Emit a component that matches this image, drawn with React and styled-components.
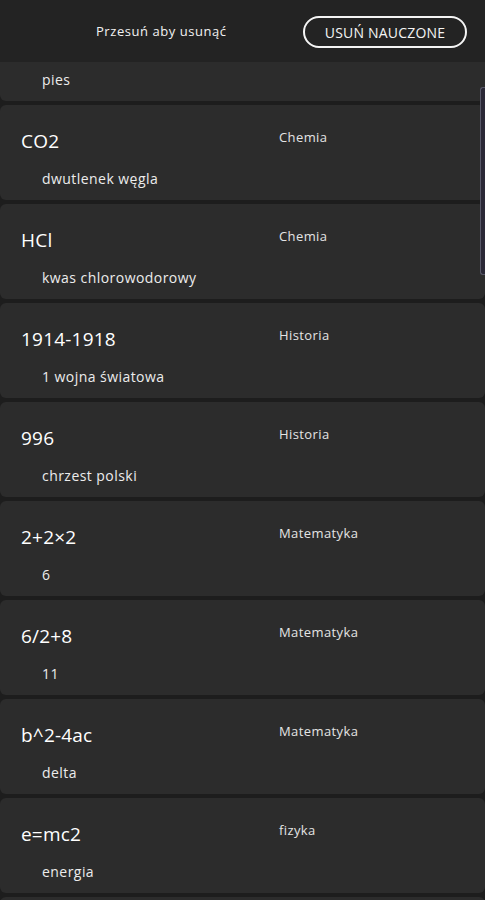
import React from "react";
import styled, { createGlobalStyle } from "styled-components";

const Global = createGlobalStyle`
  html, body { margin: 0; padding: 0; background: #1d1d1d; }
  body { font-family: "Open Sans", "Noto Sans", sans-serif; color: #fff; overflow: hidden; }
`;

const Screen = styled.div`
  position: relative;
  width: 485px;
  height: 900px;
  overflow: hidden;
  background: #1d1d1d;
  display: flex;
  flex-direction: column;
`;

const Header = styled.header`
  height: 62px;
  flex: none;
  background: #232323;
  display: flex;
  align-items: center;
  padding: 0 18px 0 96px;
  box-sizing: border-box;
  justify-content: space-between;
`;

const Hint = styled.span`
  font-size: 13px;
  font-weight: 500;
  letter-spacing: 0.55px;
  color: #f2f2f2;
`;

const ClearButton = styled.button`
  height: 32px;
  width: 164px;
  border: 2px solid #f4f4f4;
  border-radius: 16px;
  background: transparent;
  color: #f4f4f4;
  font-family: inherit;
  font-size: 14px;
  font-weight: 500;
  letter-spacing: 0.2px;
  padding: 0;
  margin-top: 2px;
`;

const List = styled.div`
  display: flex;
  flex-direction: column;
  gap: 4px;
`;

const Card = styled.div`
  background: #2c2c2c;
  border-radius: 6px;
  height: ${(p) => (p.$clipped ? "39px" : "95px")};
  border-top-left-radius: ${(p) => (p.$clipped ? "0" : "6px")};
  border-top-right-radius: ${(p) => (p.$clipped ? "0" : "6px")};
  box-sizing: border-box;
  padding: ${(p) => (p.$clipped ? "9px 0 0 42px" : "24px 0 0 21px")};
  display: grid;
  grid-template-columns: 258px 1fr;
  grid-template-rows: 24px 1fr;
  flex: none;
`;

const Term = styled.div`
  font-size: 19px;
  line-height: 24px;
  color: #fff;
  font-weight: 500;
  letter-spacing: 0.2px;
`;

const Category = styled.div`
  font-size: 13px;
  line-height: 18px;
  font-weight: 500;
  letter-spacing: 0.4px;
  color: #e4e4e4;
  margin-top: -1px;
`;

const Meaning = styled.div`
  grid-column: 1 / 2;
  font-size: 14px;
  line-height: 18px;
  font-weight: 500;
  letter-spacing: 0.45px;
  color: #ececec;
  padding-left: ${(p) => (p.$clipped ? "0" : "21px")};
  margin-top: ${(p) => (p.$clipped ? "0" : "17px")};
`;

const Scrollbar = styled.div`
  position: absolute;
  right: 0;
  top: 87px;
  width: 5px;
  height: 188px;
  box-sizing: border-box;
  border: 1px solid #585868;
  border-right: none;
  border-radius: 3px 0 0 3px;
  background: #2a2836;
`;

const items = [
  ["CO2", "Chemia", "dwutlenek węgla"],
  ["HCl", "Chemia", "kwas chlorowodorowy"],
  ["1914-1918", "Historia", "1 wojna światowa"],
  ["996", "Historia", "chrzest polski"],
  ["2+2×2", "Matematyka", "6"],
  ["6/2+8", "Matematyka", "11"],
  ["b^2-4ac", "Matematyka", "delta"],
  ["e=mc2", "fizyka", "energia"],
];

export default function App() {
  return (
    <Screen>
      <Global />
      <Header>
        <Hint>Przesuń aby usunąć</Hint>
        <ClearButton>USUŃ NAUCZONE</ClearButton>
      </Header>
      <List>
        <Card $clipped>
          <Meaning $clipped>pies</Meaning>
        </Card>
        {items.map(([t, c, m]) => (
          <Card key={t}>
            <Term>{t}</Term>
            <Category>{c}</Category>
            <Meaning>{m}</Meaning>
          </Card>
        ))}
        <Card />
      </List>
      <Scrollbar />
    </Screen>
  );
}
